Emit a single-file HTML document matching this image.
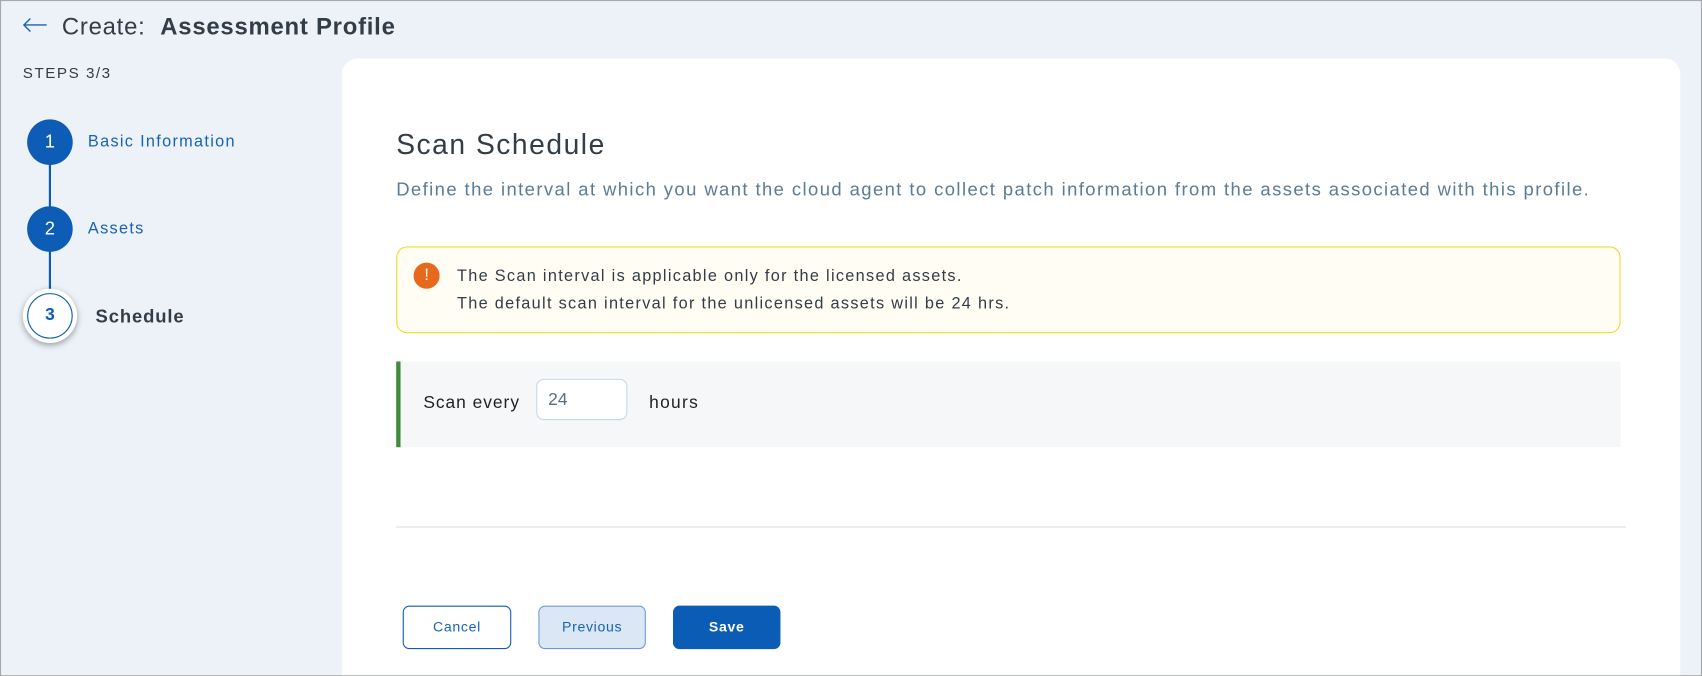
<!DOCTYPE html>
<html><head><meta charset="utf-8"><style>
html,body{margin:0;padding:0;width:1702px;height:676px;overflow:hidden;background:#edf2f9;}
#w{position:absolute;left:0;top:0;width:1568px;height:622.7px;overflow:hidden;transform:scale(1.08546);transform-origin:0 0;font-family:"Liberation Sans",sans-serif;background:#edf2f9;box-sizing:border-box;border:1px solid #a8a8a8;}
.a{position:absolute;white-space:nowrap;}
.c{position:absolute;border-radius:50%;box-sizing:border-box;text-align:center;font-size:17px;}
.btn{position:absolute;top:557px;height:40px;border-radius:6px;box-sizing:border-box;font-size:13px;text-align:center;line-height:38px;letter-spacing:0.6px;}
</style></head><body><div id="w">
<svg class="a" style="left:19px;top:14px" width="24" height="16" viewBox="0 0 24 16"><path d="M23 8H2M8 2L2 8l6 6" fill="none" stroke="#1763b8" stroke-width="1.3"/></svg>
<div class="a" style="left:56px;top:11px;font-size:22px;color:#333d47;letter-spacing:0.7px">Create:&nbsp; <b>Assessment Profile</b></div>
<div class="a" style="left:20px;top:58px;font-size:14px;color:#333d47;letter-spacing:1.4px">STEPS 3/3</div>
<div class="a" style="left:44px;top:130px;width:2px;height:160px;background:#0d5cb5"></div>
<div class="c" style="left:24px;top:109px;width:42px;height:42px;background:#0d5cb5;color:#fff;line-height:42px">1</div>
<div class="a" style="left:80px;top:121px;font-size:15px;color:#1763b8;letter-spacing:1.2px">Basic Information</div>
<div class="c" style="left:24px;top:189px;width:42px;height:42px;background:#0d5cb5;color:#fff;line-height:42px">2</div>
<div class="a" style="left:80px;top:201px;font-size:15px;color:#1763b8;letter-spacing:1.2px">Assets</div>
<div class="c" style="left:20px;top:265px;width:50px;height:50px;background:#fff;box-shadow:0 2px 6px rgba(0,0,0,.35);"></div>
<div class="c" style="left:24px;top:269px;width:42px;height:42px;border:1.5px solid #0d5cb5;color:#0d5cb5;line-height:39px;font-weight:bold;font-size:16px">3</div>
<div class="a" style="left:87px;top:281px;font-size:17px;font-weight:bold;color:#333d47;letter-spacing:0.8px">Schedule</div>
<div class="a" style="left:314px;top:53px;width:1233px;height:569px;background:#fff;border-radius:14px 14px 0 0"></div>
<div class="a" style="left:364px;top:117px;font-size:26px;color:#333d47;letter-spacing:1.4px">Scan Schedule</div>
<div class="a" style="left:364px;top:164px;font-size:17px;color:#5c7c94;letter-spacing:1.3px">Define the interval at which you want the cloud agent to collect patch information from the assets associated with this profile.</div>
<div class="a" style="left:364px;top:226px;width:1128px;height:80px;box-sizing:border-box;border:1px solid #f2da2a;border-radius:10px;background:#fffdf4"></div>
<div class="c" style="left:380px;top:241px;width:24px;height:24px;background:#e8691c;color:#fff;font-size:15px;line-height:24px">!</div>
<div class="a" style="left:420px;top:241px;font-size:15px;color:#333d47;line-height:25px;letter-spacing:1.2px">The Scan interval is applicable only for the licensed assets.<br>The default scan interval for the unlicensed assets will be 24 hrs.</div>
<div class="a" style="left:364px;top:332px;width:1128px;height:79px;background:#f5f7f9;border-left:4px solid #3f8d3a;box-sizing:border-box"></div>
<div class="a" style="left:389px;top:362px;font-size:16px;color:#222;letter-spacing:0.9px">Scan every</div>
<div class="a" style="left:493px;top:348px;width:84px;height:38px;box-sizing:border-box;border:1px solid #c5d8ea;border-radius:7px;background:#fff"></div>
<div class="a" style="left:504px;top:359px;font-size:16px;color:#5c6e80">24</div>
<div class="a" style="left:597px;top:362px;font-size:16px;color:#222;letter-spacing:1.2px">hours</div>
<div class="a" style="left:364px;top:484px;width:1133px;height:1px;background:#dcdcdc"></div>
<div class="btn" style="left:370px;width:100px;border:1px solid #0d5cb5;color:#1763b8;background:#fff">Cancel</div>
<div class="btn" style="left:495px;width:99px;border:1px solid #6b9bd0;color:#1763b8;background:#dbe7f4">Previous</div>
<div class="btn" style="left:619px;width:99px;background:#0b5cb4;color:#fff;font-weight:bold;line-height:40px">Save</div>
</div></body></html>
